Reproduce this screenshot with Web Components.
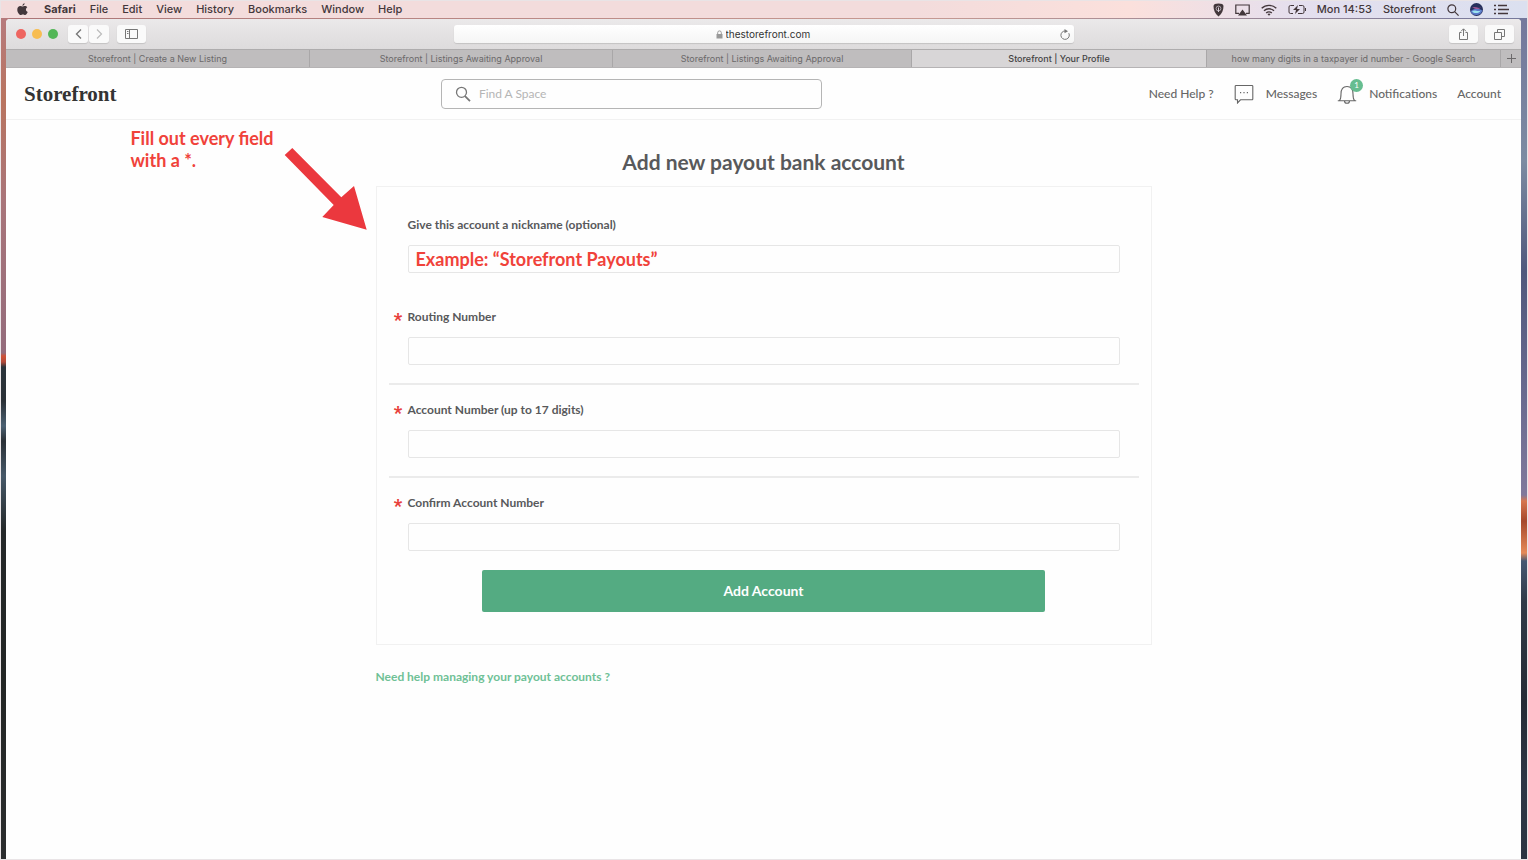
<!DOCTYPE html>
<html lang="en">
<head>
<meta charset="utf-8">
<title>Storefront | Your Profile</title>
<style>
  body {
    margin: 0;
    font-family: Lato, "Liberation Sans", sans-serif;
  }
</style>
</head>
<body>
<desk-top>
  <menu-bar slot="menu"></menu-bar>
  <browser-window>
    <site-header></site-header>
    <payout-page></payout-page>
  </browser-window>
</desk-top>

<script>
const icons = {
  apple: [11, 13, `<path fill="currentColor" d="M7.6 0.3c.1 1.3-1 2.500-2.200 2.500C5.300 1.600 6.400.500 7.600.300zM5.500 3.600c.600 0 1.300-.600 2.400-.600 1 0 1.900.500 2.400 1.300-2 1.200-1.700 3.900.400 4.700-.500 1.400-1.500 3-2.600 3-.800 0-1.200-.500-2.200-.500s-1.400.500-2.200.500C2.200 12 .300 9.200.300 6.700c0-2.300 1.400-3.600 3-3.600.900 0 1.700.500 2.200.500z"/>`],
  shield: [11, 14, `<path fill="currentColor" d="M5.500.500c3 0 5 .800 5 2.500 0 4-1.500 7.500-5 10.500C2 10.500.500 7 .500 3c0-1.700 2-2.500 5-2.500z"/><circle cx="5.500" cy="5.500" r="2.400" fill="none" stroke="#d9cfd8" stroke-width=".7"/><path stroke="#d9cfd8" d="M5.500 4.500v4.500"/>`],
  airplay: [15, 12, `<path fill="none" stroke="currentColor" stroke-width="1.200" d="M4 9.400H.800V1h13.400v8.400H11"/><path fill="currentColor" d="M7.500 5.500 12 11.500H3z"/>`],
  wifi: [16, 12, `<g fill="none" stroke="currentColor" stroke-width="1.400"><path d="M.700 4.300a10.500 10.500 0 0 1 14.600 0M3 6.800a7.200 7.200 0 0 1 10 0M5.200 9.100a4 4 0 0 1 5.600 0"/></g><path fill="currentColor" d="M6.500 10.200a2.200 2.200 0 0 1 3 0L8 11.800z"/>`],
  battery: [18, 11, `<g fill="none" stroke="currentColor"><path d="M6 1.500H2.500a1.500 1.500 0 0 0-1.500 1.500v5a1.500 1.500 0 0 0 1.500 1.500H5M11 1.500h3.500A1.500 1.500 0 0 1 16 3v5a1.500 1.500 0 0 1-1.500 1.500H10M17.500 4v3"/></g><path fill="currentColor" d="m10 1-5 5h3l-1 4 5-5H9z"/>`],
  search: [12, 12, `<g fill="none" stroke="currentColor" stroke-width="1.200"><circle cx="4.800" cy="4.800" r="3.900"/><path d="m7.600 7.600 4 4"/></g>`],
  siri: [13, 13, `<circle cx="6.500" cy="6.500" r="6.500" fill="#26305c"/><path fill="#5a78c8" d="M.500 8.500c3-4 9-3 12-1a6.500 6.500 0 0 1-12 1z"/><path fill="#9be3ef" d="M2 8.200c3-2 5 1 9-.700-2 3-7 3.500-9 .700z"/><path fill="#c965a8" d="M2 5c3-2 6 1 9-.500-3 2.500-6 .500-9 .500z"/>`],
  list: [15, 11, `<path fill="none" stroke="currentColor" stroke-width="1.500" d="M0 1.500h2M4 1.500h9M0 5.500h2M4 5.500h11M0 9.500h2M4 9.500h10"/>`],
  back: [7, 12, `<path fill="none" stroke="currentColor" stroke-width="1.400" d="M6 1.500 1.500 6 6 10.500"/>`],
  forward: [7, 12, `<path fill="none" stroke="currentColor" stroke-width="1.200" d="M1 1.500 5.500 6 1 10.500"/>`],
  sidebar: [13, 10, `<path fill="none" stroke="currentColor" d="M.500.500h12v9H.500zM4.500.500v9M2 2.500h1.500M2 4.500h1.500"/>`],
  lock: [7, 9, `<path fill="currentColor" d="M.500 4h6v4.500h-6z"/><path fill="none" stroke="currentColor" d="M1.700 4.500V2.700a1.800 1.800 0 0 1 3.600 0v1.800"/>`],
  reload: [10, 11, `<path fill="none" stroke="currentColor" d="M8.800 4.200A4.200 4.200 0 1 1 5.500 2"/><path fill="currentColor" d="M4.500 0 8 2.200 4.500 4.200z"/>`],
  share: [11, 12, `<path fill="none" stroke="currentColor" d="M3.500 4.500h-2v7h8v-7h-2M5.500 8V1M3 3.300 5.500.800 8 3.300"/>`],
  windows: [11, 11, `<path fill="none" stroke="currentColor" d="M.500 3.500h7v7h-7zM3.500 3.500v-3h7v7h-3"/>`],
  plus: [9, 9, `<path fill="none" stroke="currentColor" d="M4.500 0v9M0 4.500h9"/>`],
  find: [16, 16, `<g fill="none" stroke="currentColor" stroke-width="1.300"><circle cx="6.500" cy="6.300" r="5"/><path stroke-width="1.700" d="m10 10.200 5 5"/></g>`],
  message: [20, 20, `<path fill="none" stroke="currentColor" stroke-width="1.100" d="M2 1.500h16a.800.800 0 0 1 .800.800V15a.800.800 0 0 1-.800.800H6.500L3.500 19v-3.200H2a.800.800 0 0 1-.800-.800V2.300A.800.800 0 0 1 2 1.500z"/><path fill="currentColor" d="M6 8h1.200v1.200H6zM9.400 8h1.200v1.200H9.400zM12.800 8H14v1.200h-1.200z"/>`],
  bell: [20, 20, `<path fill="none" stroke="currentColor" stroke-width="1.100" d="M.800 16.800h18.400M2.500 16.500c1.300-1.500 1.500-3 1.500-6.500 0-5 2-7.500 6-7.500s6 2.500 6 7.500c0 3.500.200 5 1.500 6.500M7.500 17c0 1.500 1 2.300 2.500 2.300s2.500-.800 2.500-2.300"/>`],
  arrow: [84, 84, `<path fill="#eb383e" d="M.700 8 8.300 1l49 49.300L70 39l12.700 43.700L38.300 70l11.400-12z"/>`]
};

// every element: one template, one open shadow root
function define(name, html) {
  const template = document.createElement('template');
  template.innerHTML = html;

  customElements.define(name, class extends HTMLElement {
    constructor() {
      super();
      this.attachShadow({ mode: 'open' });
      this.shadowRoot.appendChild(template.content.cloneNode(true));
    }
  });
}

class UiIcon extends HTMLElement {
  connectedCallback() {
    if (this.shadowRoot) return;
    const [width, height, shape] = icons[this.getAttribute('name')];
    this.attachShadow({ mode: 'open' }).innerHTML = `
      <style>
        :host { display: inline-block; flex: none; }
        svg { display: block; }
      </style>
      <svg width="${width}" height="${height}" viewBox="0 0 ${width} ${height}" aria-hidden="true">${shape}</svg>
    `;
  }
}

customElements.define('ui-icon', UiIcon);

define('desk-top', `
  <style>
    :host {
      box-sizing: border-box;
      display: flex;
      flex-direction: column;
      min-height: 100vh;
      border: 1px solid #e9e4e6;
      background:
        linear-gradient(#b67a7c 20px, #b9745f 100px, #a9757a 200px, #946c7c 352px, #cf5238 355px, #b14a3a 361px, #2b343b 366px, #2a3036 400px, #4b6072 425px, #2a3036 440px, #465868 475px, #242829 530px, #232625 680px, #2b2d2e) left / 8px 100% no-repeat,
        linear-gradient(#74789c 20px, #7c8ba2 160px, #50587c 270px, #6a6b90 400px, #80799b 494px, #d7764f 500px, #a5482c 520px, #e58a58 552px, #465872 560px, #303a48 600px, #252b35 700px, #2d3645 780px, #2b3442) right / 8px 100% no-repeat,
        linear-gradient(90deg, #ab7476, #c79a92 60%, #74789c);
    }

    ::slotted(browser-window) {
      flex: 1;
      margin: 0 6px 0 5px;
    }
  </style>
  <slot name="menu"></slot>
  <slot></slot>
`);

define('menu-bar', `
  <style>
    :host {
      display: flex;
      justify-content: space-between;
      height: 17px;
      padding: 0 18px 0 16px;
      margin-bottom: 1px;
      background: linear-gradient(90deg, #f3dcdc, #f3dcdc 60%, #fbe0dc 74%, #e4dfee 85%, #dbe0f0);
      color: #43373b;
      font: 500 11px/17px Inter, "Liberation Sans", sans-serif;
    }

    nav, .status {
      display: flex;
      align-items: center;
      gap: 14px;
    }

    .status {
      gap: 11px;
    }

    button {
      padding: 0;
      border: 0;
      background: none;
      color: inherit;
      font: inherit;
    }

    .app {
      margin-left: 2px;
      font-weight: 700;
    }
  </style>
  <nav>
    <ui-icon name="apple"></ui-icon>
    <button class="app">Safari</button>
    <button>File</button>
    <button>Edit</button>
    <button>View</button>
    <button>History</button>
    <button>Bookmarks</button>
    <button>Window</button>
    <button>Help</button>
  </nav>
  <div class="status">
    <ui-icon name="shield"></ui-icon>
    <ui-icon name="airplay"></ui-icon>
    <ui-icon name="wifi"></ui-icon>
    <ui-icon name="battery"></ui-icon>
    <span>Mon 14:53</span>
    <span>Storefront</span>
    <ui-icon name="search"></ui-icon>
    <ui-icon name="siri"></ui-icon>
    <ui-icon name="list"></ui-icon>
  </div>
`);

define('browser-window', `
  <style>
    :host {
      display: block;
      overflow: hidden;
      border-radius: 4px 4px 0 0;
      background: #fefefe;
    }
  </style>
  <browser-toolbar></browser-toolbar>
  <tab-strip></tab-strip>
  <slot></slot>
`);

define('browser-toolbar', `
  <style>
    :host {
      display: grid;
      grid-template-columns: 1fr minmax(0, 620px) 1fr;
      align-items: center;
      height: 30px;
      padding: 0 7px;
      background: linear-gradient(#ebe9ea, #dddbdc);
      font: 10px/18px Inter, "Liberation Sans", sans-serif;
    }

    .left, .right, .lights, .pair, .address {
      display: flex;
      align-items: center;
    }

    .left {
      gap: 8px;
      padding-left: 3px;
    }

    .lights {
      gap: 6px;
      margin-right: 2px;
    }

    .lights i {
      width: 10px;
      height: 10px;
      border-radius: 50%;
      background: var(--light);
    }

    .pair {
      gap: 1px;
    }

    .right {
      justify-content: flex-end;
      gap: 7px;
    }

    button {
      display: flex;
      align-items: center;
      justify-content: center;
      width: 29px;
      height: 18px;
      padding: 0;
      border: 0;
      border-radius: 3px;
      background: #fafafa;
      box-shadow: 0 1px 1px #c4c2c3;
      color: #777;
    }

    .pair button {
      width: 20px;
    }

    .pair button + button {
      color: #bbb;
    }

    .address {
      justify-content: center;
      gap: 3px;
      height: 18px;
      border-radius: 3px;
      background: linear-gradient(#fff, #f5f5f5);
      box-shadow: 0 1px 1px #c4c2c3;
      color: #999;
    }

    .address input {
      width: 86px;
      height: 18px;
      padding: 0;
      border: 0;
      background: none;
      color: #333;
      font: inherit;
    }

    .head, .tail {
      flex: 1 1 0;
      display: flex;
      justify-content: flex-end;
    }

    .tail button {
      width: 18px;
      background: none;
      box-shadow: none;
      color: #777;
    }
  </style>
  <div class="left">
    <div class="lights">
      <i style="--light: #ee6560"></i>
      <i style="--light: #f7bd52"></i>
      <i style="--light: #53b657"></i>
    </div>
    <div class="pair">
      <button aria-label="Back"><ui-icon name="back"></ui-icon></button>
      <button aria-label="Forward"><ui-icon name="forward"></ui-icon></button>
    </div>
    <button aria-label="Sidebar"><ui-icon name="sidebar"></ui-icon></button>
  </div>
  <div class="address">
    <div class="head"></div>
    <ui-icon name="lock"></ui-icon>
    <input value="thestorefront.com" aria-label="Address">
    <div class="tail">
      <button aria-label="Reload"><ui-icon name="reload"></ui-icon></button>
    </div>
  </div>
  <div class="right">
    <button aria-label="Share"><ui-icon name="share"></ui-icon></button>
    <button aria-label="Tabs"><ui-icon name="windows"></ui-icon></button>
  </div>
`);

define('tab-strip', `
  <style>
    :host {
      display: grid;
      grid-template-columns: 304fr 303fr 299fr 295fr 294fr 20px;
      height: 17px;
      border-top: 1px solid #aeacad;
      border-bottom: 1px solid #b5b3b4;
      background: #bfbdbe;
      color: #6b696a;
      font: 9px/18px Inter, "Liberation Sans", sans-serif;
    }

    a, button {
      overflow: hidden;
      border: 0;
      border-right: 1px solid #a9a7a8;
      color: inherit;
      text-align: center;
      text-decoration: none;
      white-space: nowrap;
    }

    .active {
      background: #d8d6d7;
      color: #444;
      font-weight: 500;
    }

    button {
      display: flex;
      align-items: center;
      justify-content: center;
      padding: 0;
      border: 0;
      background: none;
    }
  </style>
  <a href="#">Storefront | Create a New Listing</a>
  <a href="#">Storefront | Listings Awaiting Approval</a>
  <a href="#">Storefront | Listings Awaiting Approval</a>
  <a href="#" class="active">Storefront | Your Profile</a>
  <a href="#">how many digits in a taxpayer id number - Google Search</a>
  <button aria-label="New tab"><ui-icon name="plus"></ui-icon></button>
`);

define('site-header', `
  <style>
    :host {
      display: grid;
      grid-template-columns: 35fr 32fr 57fr;
      align-items: center;
      height: 51px;
      padding: 0 20px 0 18px;
      border-bottom: 1px solid #f1f1f1;
      color: #666;
      font-size: 12px;
    }

    a {
      color: inherit;
      text-decoration: none;
    }

    .logo {
      color: #333;
      font: 700 21px/24px "Liberation Serif", serif;
    }

    .search {
      display: flex;
      align-items: center;
      gap: 8px;
      height: 28px;
      padding-left: 13px;
      border: 1px solid #b5b5b5;
      border-radius: 4px;
      color: #777;
    }

    .search input {
      flex: 1;
      min-width: 0;
      padding: 0;
      border: 0;
      outline: 0;
      background: none;
      font: 12px/16px Lato, sans-serif;
    }

    .search input::placeholder {
      color: #b5b5b5;
    }

    nav, nav a {
      display: flex;
      align-items: center;
    }

    nav {
      justify-content: flex-end;
      gap: 20px;
      font-weight: 500;
      line-height: 16px;
    }

    nav a {
      gap: 12px;
    }

    .bell {
      position: relative;
      display: flex;
    }

    .badge {
      position: absolute;
      top: -5px;
      right: -6px;
      width: 13px;
      border-radius: 50%;
      background: #66bd90;
      color: #fff;
      font: 8px/13px Lato, sans-serif;
      text-align: center;
    }
  </style>
  <a class="logo" href="#">Storefront</a>
  <label class="search">
    <ui-icon name="find"></ui-icon>
    <input type="text" placeholder="Find A Space" aria-label="Find A Space">
  </label>
  <nav>
    <a href="#">Need Help ?</a>
    <a href="#"><ui-icon name="message"></ui-icon>Messages</a>
    <a href="#"><span class="bell"><ui-icon name="bell"></ui-icon><span class="badge">1</span></span>Notifications</a>
    <a href="#">Account</a>
  </nav>
`);

class FormField extends HTMLElement {
  connectedCallback() {
    if (this.shadowRoot) return;
    const required = this.hasAttribute('required');
    this.attachShadow({ mode: 'open' }).innerHTML = `
      <style>
        :host {
          display: grid;
          grid-template-columns: 19px 1fr 19px;
          row-gap: 10px;
          color: #58595b;
        }

        .mark {
          grid-column: 1;
          color: #e8413c;
          font: 900 18px/26px Roboto, sans-serif;
          height: 20px;
          text-align: center;
        }

        label {
          grid-column: 2;
          font-weight: 700;
          font-size: 12px;
          line-height: 20px;
        }

        input {
          box-sizing: border-box;
          grid-column: 2;
          width: 100%;
          height: 28px;
          padding: 0 7px;
          border: 1px solid #e6e6e6;
          border-radius: 2px;
          background: #fefefe;
          color: #f0423a;
          font: 700 18px/24px Lato, sans-serif;
        }
      </style>
      <span class="mark">${required ? '*' : ''}</span>
      <label for="field">${this.getAttribute('label')}</label>
      <input id="field" type="text" value="${this.getAttribute('value') || ''}">
    `;
  }
}

customElements.define('form-field', FormField);

define('red-note', `
  <style>
    :host {
      display: flex;
      justify-content: flex-end;
      gap: 10px;
      padding: 7px 8px 0 0;
      color: #f0423a;
      font-weight: 700;
      font-size: 18px;
      line-height: 22px;
      white-space: nowrap;
    }

    ui-icon {
      margin-top: 20px;
    }
  </style>
  <div><slot></slot></div>
  <ui-icon name="arrow"></ui-icon>
`);

define('payout-page', `
  <style>
    :host {
      display: grid;
      grid-template-columns: 1fr minmax(0, 776px) 1fr;
    }

    main {
      padding-top: 30px;
    }

    h1 {
      margin: 0 0 12px;
      color: #58595b;
      font-size: 21px;
      line-height: 24px;
      text-align: center;
    }

    form {
      padding: 28px 12px 32px;
      border: 1px solid #f1f1f1;
    }

    form-field:first-child {
      margin-bottom: 34px;
    }

    hr {
      height: 2px;
      margin: 18px 0 15px;
      border: 0;
      background: #ebebeb;
    }

    button {
      display: block;
      width: 75%;
      height: 42px;
      margin: 19px auto 0;
      border: 0;
      border-radius: 2px;
      background: #54ab82;
      color: #fff;
      font: 700 14px/16px Lato, sans-serif;
    }

    .help {
      display: inline-block;
      margin-top: 24px;
      color: #6fc196;
      font-weight: 700;
      font-size: 12px;
      line-height: 16px;
      text-decoration: none;
    }
  </style>
  <red-note>Fill out every field<br>with a *.</red-note>
  <main>
    <h1>Add new payout bank account</h1>
    <form>
      <form-field label="Give this account a nickname (optional)" value="Example: “Storefront Payouts”"></form-field>
      <form-field label="Routing Number" required></form-field>
      <hr>
      <form-field label="Account Number (up to 17 digits)" required></form-field>
      <hr>
      <form-field label="Confirm Account Number" required></form-field>
      <button type="button">Add Account</button>
    </form>
    <a class="help" href="#">Need help managing your payout accounts ?</a>
  </main>
`);
</script>
</body>
</html>
